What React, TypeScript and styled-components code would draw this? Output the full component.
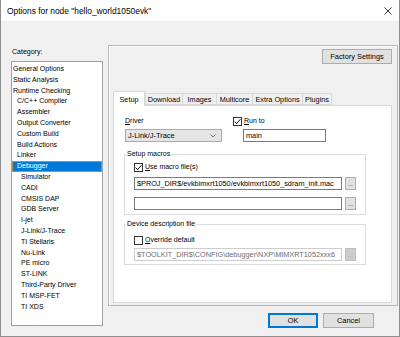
import React from "react";
import styled, { createGlobalStyle } from "styled-components";

const GlobalStyle = createGlobalStyle`
  html, body {
    margin: 0;
    padding: 0;
    background: #f0f0f0;
  }
  * {
    box-sizing: border-box;
  }
  body {
    font-family: "Liberation Sans", Arial, sans-serif;
    font-size: 7px;
    color: #000;
  }
`;

const Window = styled.div`
  width: 400px;
  height: 337px;
  display: flex;
  flex-direction: column;
  background: #f0f0f0;
  border: 1px solid #8f8f8f;
  border-top: none;
  overflow: hidden;
`;

const TitleBar = styled.div`
  height: 21px;
  flex: 0 0 21px;
  background: #fff;
  display: flex;
  align-items: center;
  justify-content: space-between;
  padding: 0 7px 0 6px;
  font-size: 8.4px;
`;

const Body = styled.div`
  display: flex;
  gap: 5px;
  padding: 24px 0 0 10px;
`;

const LeftColumn = styled.div`
  width: 92px;
  flex: 0 0 92px;
  display: flex;
  flex-direction: column;
`;

const Label = styled.div`
  line-height: 14px;
  margin: 0 0 2px 1px;
`;

const CategoryList = styled.ul`
  list-style: none;
  margin: 0;
  padding: 2px 0 0;
  height: 265px;
  background: #fff;
  border: 1px solid #a0a0a0;
`;

const Item = styled.li<{ $level: number; $selected?: boolean }>`
  height: 10.8px;
  line-height: 10.8px;
  padding-left: ${(p) => 1 + p.$level * 4}px;
  white-space: nowrap;
  background: ${(p) => (p.$selected ? "#0078d7" : "transparent")};
  color: ${(p) => (p.$selected ? "#fff" : "#000")};
  outline: ${(p) => (p.$selected ? "1px solid #c08a55" : "none")};
  outline-offset: -1px;
`;

const RightColumn = styled.div`
  width: 290px;
  flex: 0 0 290px;
  display: flex;
  flex-direction: column;
`;

const Panel = styled.div`
  height: 261px;
  display: flex;
  flex-direction: column;
  border: 1px solid #b9b9b9;
  box-shadow: inset 1px 1px 0 #fff;
  padding: 3px 5px 2px 4px;
`;

const TopRow = styled.div`
  display: flex;
  justify-content: flex-end;
`;

const Button = styled.button<{ $w: number; $default?: boolean }>`
  width: ${(p) => p.$w}px;
  height: 15px;
  padding: 0;
  font: inherit;
  font-size: 7.4px;
  color: #000;
  background: #e1e1e1;
  border: 1px solid ${(p) => (p.$default ? "#0078d7" : "#adadad")};
  box-shadow: ${(p) => (p.$default ? "inset 0 0 0 1px #0078d7" : "none")};
`;

const TabStrip = styled.div`
  display: flex;
  align-items: flex-end;
  height: 14px;
  margin-top: 27px;
`;

const Tab = styled.div<{ $w: number; $active?: boolean }>`
  width: ${(p) => p.$w}px;
  height: ${(p) => (p.$active ? 15 : 12)}px;
  margin-bottom: ${(p) => (p.$active ? -1 : 0)}px;
  margin-right: ${(p) => (p.$active ? 0 : -1)}px;
  position: relative;
  z-index: ${(p) => (p.$active ? 1 : 0)};
  display: flex;
  align-items: center;
  justify-content: center;
  font-size: 7.3px;
  background: ${(p) => (p.$active ? "#fff" : "#f0f0f0")};
  border: 1px solid #d9d9d9;
  border-bottom: ${(p) => (p.$active ? "none" : "1px solid #d9d9d9")};
`;

const TabPage = styled.div`
  flex: 1;
  background: #fff;
  border: 1px solid #d9d9d9;
  padding: 10px 0 0 10px;
  display: flex;
  flex-direction: column;
`;

const DriverRow = styled.div`
  display: flex;
  padding-left: 1px;
`;

const DriverCol = styled.div`
  width: 108px;
  display: flex;
  flex-direction: column;
`;

const FieldLabel = styled.div`
  line-height: 10px;
  height: 10px;
`;

const Select = styled.div`
  width: 97px;
  height: 13px;
  margin-top: 3px;
  background: #e5e5e5;
  border: 1px solid #acacac;
  display: flex;
  align-items: center;
  justify-content: space-between;
  padding: 0 5px 0 2px;
  font-size: 7.4px;
`;

const RunCol = styled.div`
  display: flex;
  flex-direction: column;
`;

const CheckRow = styled.label`
  display: flex;
  align-items: center;
  gap: 2px;
  height: 10px;
  line-height: 10px;
`;

const Box = styled.span`
  width: 9px;
  height: 9px;
  flex: 0 0 9px;
  border: 1px solid #333;
  background: #fff;
  display: flex;
  align-items: center;
  justify-content: center;
`;

const TextInput = styled.div<{ $w: number; $disabled?: boolean }>`
  width: ${(p) => p.$w}px;
  height: 13px;
  line-height: 11px;
  padding: 0 2px;
  font-size: 7.3px;
  white-space: nowrap;
  overflow: hidden;
  background: #fff;
  border: 1px solid ${(p) => (p.$disabled ? "#cccccc" : "#7a7a7a")};
  color: ${(p) => (p.$disabled ? "#6d6d6d" : "#000")};
`;

const MainInput = styled(TextInput)`
  margin: 3px 0 0 10px;
`;

const Group = styled.fieldset<{ $top: number; $bottom: number }>`
  width: 242px;
  margin: ${(p) => p.$top}px 0 0;
  padding: 0 9px ${(p) => p.$bottom}px;
  border: 1px solid #dcdcdc;
  min-width: 0;
`;

const Legend = styled.legend`
  margin-left: -8px;
  padding: 0 1px;
  line-height: 10px;
`;

const FileRow = styled.div<{ $top: number }>`
  display: flex;
  gap: 3px;
  margin-top: ${(p) => p.$top}px;
`;

const Browse = styled.div<{ $disabled?: boolean }>`
  width: 11px;
  height: 13px;
  display: flex;
  align-items: flex-end;
  justify-content: center;
  padding-bottom: 2px;
  line-height: 6px;
  font-size: 6px;
  color: ${(p) => (p.$disabled ? "#a0a0a0" : "#000")};
  background: ${(p) => (p.$disabled ? "#cccccc" : "#e1e1e1")};
  border: 1px solid ${(p) => (p.$disabled ? "#bfbfbf" : "#adadad")};
`;

const Spacer = styled.div<{ $h: number }>`
  height: ${(p) => p.$h}px;
`;

const ButtonRow = styled.div`
  display: flex;
  justify-content: flex-end;
  gap: 5px;
  margin-top: 7px;
  padding-right: 24px;
`;

const Check = ({ on }: { on: boolean }) => (
  <Box>
    {on && (
      <svg width="7" height="7" viewBox="0 0 7 7">
        <path d="M0.6 3.6 L2.6 5.6 L6.4 1.2" fill="none" stroke="#000" strokeWidth="0.9" />
      </svg>
    )}
  </Box>
);

const categories: [string, number][] = [
  ["General Options", 0],
  ["Static Analysis", 0],
  ["Runtime Checking", 0],
  ["C/C++ Compiler", 1],
  ["Assembler", 1],
  ["Output Converter", 1],
  ["Custom Build", 1],
  ["Build Actions", 1],
  ["Linker", 1],
  ["Debugger", 1],
  ["Simulator", 2],
  ["CADI", 2],
  ["CMSIS DAP", 2],
  ["GDB Server", 2],
  ["I-jet", 2],
  ["J-Link/J-Trace", 2],
  ["TI Stellaris", 2],
  ["Nu-Link", 2],
  ["PE micro", 2],
  ["ST-LINK", 2],
  ["Third-Party Driver", 2],
  ["TI MSP-FET", 2],
  ["TI XDS", 2],
];

const tabs: [string, number][] = [
  ["Setup", 32],
  ["Download", 38],
  ["Images", 35],
  ["Multicore", 37],
  ["Extra Options", 51],
  ["Plugins", 30],
];

export default function App() {
  return (
    <>
      <GlobalStyle />
      <Window>
        <TitleBar>
          <span>Options for node "hello_world1050evk"</span>
          <svg width="8" height="8" viewBox="0 0 8 8">
            <path d="M0.5 0.5 L7.5 7.5 M7.5 0.5 L0.5 7.5" stroke="#000" strokeWidth="0.8" />
          </svg>
        </TitleBar>
        <Body>
          <LeftColumn>
            <Label>Category:</Label>
            <CategoryList>
              {categories.map(([name, level]) => (
                <Item key={name} $level={level} $selected={name === "Debugger"}>
                  {name}
                </Item>
              ))}
            </CategoryList>
          </LeftColumn>
          <RightColumn>
            <Panel>
              <TopRow>
                <Button $w={70}>Factory Settings</Button>
              </TopRow>
              <TabStrip>
                {tabs.map(([name, w], i) => (
                  <Tab key={name} $w={w} $active={i === 0}>
                    {name}
                  </Tab>
                ))}
              </TabStrip>
              <TabPage>
                <DriverRow>
                  <DriverCol>
                    <FieldLabel>
                      <u>D</u>river
                    </FieldLabel>
                    <Select>
                      <span>J-Link/J-Trace</span>
                      <svg width="6" height="4" viewBox="0 0 6 4">
                        <path d="M0.5 0.5 L3 3 L5.5 0.5" fill="none" stroke="#555" strokeWidth="0.8" />
                      </svg>
                    </Select>
                  </DriverCol>
                  <RunCol>
                    <CheckRow>
                      <Check on />
                      <span>
                        <u>R</u>un to
                      </span>
                    </CheckRow>
                    <MainInput $w={83}>main</MainInput>
                  </RunCol>
                </DriverRow>
                <Group $top={7} $bottom={4}>
                  <Legend>Setup macros</Legend>
                  <Spacer $h={3} />
                  <CheckRow>
                    <Check on />
                    <span>
                      <u>U</u>se macro file(s)
                    </span>
                  </CheckRow>
                  <FileRow $top={5}>
                    <TextInput $w={208}>$PROJ_DIR$/evkbimxrt1050/evkbimxrt1050_sdram_init.mac</TextInput>
                    <Browse>...</Browse>
                  </FileRow>
                  <FileRow $top={7}>
                    <TextInput $w={208} />
                    <Browse>...</Browse>
                  </FileRow>
                </Group>
                <Group $top={4} $bottom={3}>
                  <Legend>Device description file</Legend>
                  <Spacer $h={6} />
                  <CheckRow>
                    <Check on={false} />
                    <span>
                      <u>O</u>verride default
                    </span>
                  </CheckRow>
                  <FileRow $top={3}>
                    <TextInput $w={208} $disabled>
                      $TOOLKIT_DIR$\CONFIG\debugger\NXP\MIMXRT1052xxx6
                    </TextInput>
                    <Browse $disabled>...</Browse>
                  </FileRow>
                </Group>
              </TabPage>
            </Panel>
            <ButtonRow>
              <Button $w={50} $default>
                OK
              </Button>
              <Button $w={51}>Cancel</Button>
            </ButtonRow>
          </RightColumn>
        </Body>
      </Window>
    </>
  );
}
